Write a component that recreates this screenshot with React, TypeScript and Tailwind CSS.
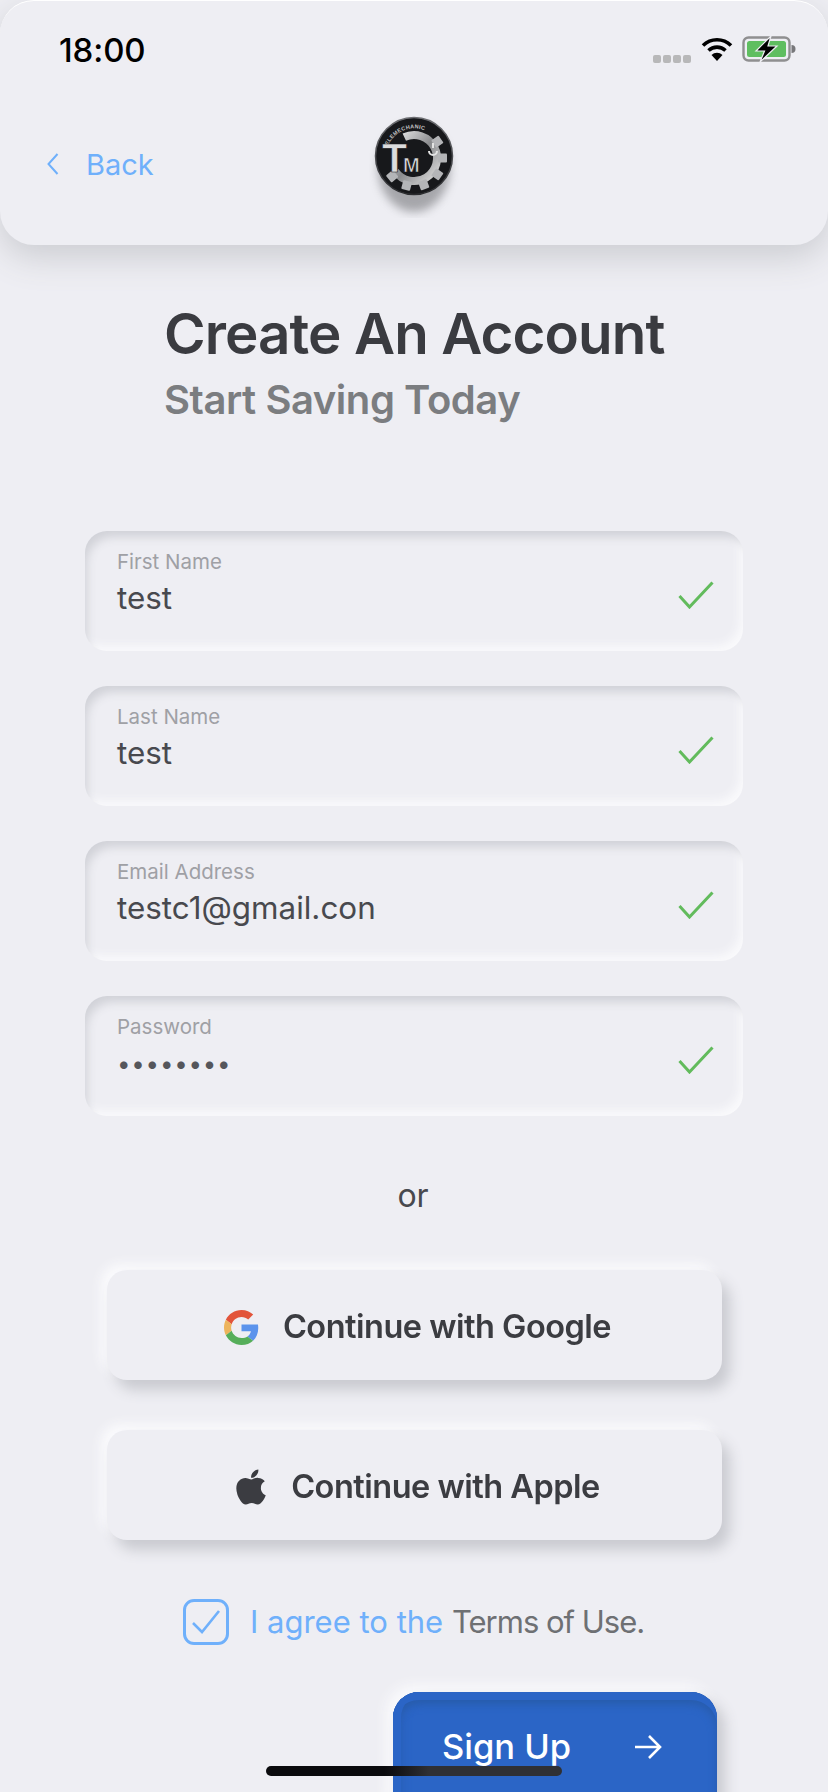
import React from 'react';
import { FaApple } from 'react-icons/fa';

const fields = [
  { label: 'First Name', value: 'test' },
  { label: 'Last Name', value: 'test' },
  { label: 'Email Address', value: 'testc1@gmail.con' },
  { label: 'Password', value: '••••••••', secret: true },
];

const gearTeeth = [55, 90, 125, 160, 195, 230];

const GoogleIcon = () => (
  <svg viewBox="0 0 48 48" className="w-[35px] h-[35px]">
    <path fill="#E2543A" d="M24 9.5c3.54 0 6.71 1.22 9.21 3.6l6.85-6.85C35.9 2.38 30.47 0 24 0 14.62 0 6.51 5.38 2.56 13.22l7.98 6.19C12.43 13.72 17.74 9.5 24 9.5z" />
    <path fill="#5B93EC" d="M46.98 24.55c0-1.57-.15-3.09-.38-4.55H24v9.02h12.94c-.58 2.96-2.26 5.48-4.78 7.18l7.73 6c4.51-4.18 7.09-10.36 7.09-17.65z" />
    <path fill="#EDB45C" d="M10.53 28.59c-.48-1.45-.76-2.99-.76-4.59s.27-3.14.76-4.59l-7.98-6.19C.92 16.46 0 20.12 0 24c0 3.88.92 7.54 2.56 10.78l7.97-6.19z" />
    <path fill="#56AE5A" d="M24 48c6.48 0 11.93-2.13 15.89-5.81l-7.73-6c-2.15 1.45-4.92 2.3-8.16 2.3-6.26 0-11.57-4.22-13.47-9.91l-7.98 6.19C6.51 42.62 14.62 48 24 48z" />
  </svg>
);

const Logo = () => (
  <svg viewBox="0 0 90 102" className="w-[90px] h-[102px]">
    <defs>
      <linearGradient id="metal" x1="0" y1="0" x2="1" y2="1">
        <stop offset="0" stopColor="#e8e8e8" />
        <stop offset="0.5" stopColor="#8a8b8e" />
        <stop offset="1" stopColor="#dedede" />
      </linearGradient>
      <linearGradient id="rimLine" x1="0" y1="0" x2="0" y2="1">
        <stop offset="0" stopColor="#6d6e72" />
        <stop offset="1" stopColor="#2a2b2e" />
      </linearGradient>
      <filter id="soft" x="-30%" y="-30%" width="160%" height="160%"><feGaussianBlur stdDeviation="5" /></filter>
      <path id="rim" d="M17 36 A29 29 0 0 1 74 36" />
    </defs>
    <ellipse cx="45" cy="52" rx="36" ry="44" fill="#6b6c70" filter="url(#soft)" opacity="0.55" />
    <circle cx="45" cy="40" r="38.5" fill="#17181b" stroke="url(#rimLine)" strokeWidth="1.5" />
    <path d="M35.3 21.2 A23 23 0 1 1 26.2 55.2" fill="none" stroke="url(#metal)" strokeWidth="8" />
    <g fill="#b4b5b8">
      {gearTeeth.map(a => (
        <rect key={a} x="40.5" y="9" width="9" height="9" rx="1" transform={`rotate(${a} 45 42)`} />
      ))}
    </g>
    <text fontFamily="Liberation Sans, sans-serif" fontSize="5.5" fontWeight="700" fill="#c4c4c4" letterSpacing="0.3">
      <textPath href="#rim" startOffset="3">TELEMECHANIC</textPath>
    </text>
    <text x="13" y="56" fontFamily="Liberation Sans, sans-serif" fontWeight="700" fill="#dcdcdd" stroke="#1b1b1d" strokeWidth="0.7">
      <tspan fontSize="41">T</tspan>
      <tspan fontSize="20" dx="-4">M</tspan>
    </text>
    <path d="M64 32 V27 M60 35 A4 4 0 0 0 68 35" fill="none" stroke="#e4e4e4" strokeWidth="2" />
  </svg>
);

const StatusBar = () => (
  <div className="flex items-center justify-between h-[100px] pl-[59px] pr-[32px]">
    <span className="mb-[2px] text-[33px] font-medium text-black leading-none -tracking-[0.1px]">18:00</span>
    <div className="flex items-center mb-[4px]">
      <div className="flex gap-[2px] mr-[10px] mt-[19px]">
        <span className="w-[8px] h-[8px] rounded-[2px] bg-[#b8b8b9]" />
        <span className="w-[8px] h-[8px] rounded-[2px] bg-[#b8b8b9]" />
        <span className="w-[8px] h-[8px] rounded-[2px] bg-[#b8b8b9]" />
        <span className="w-[8px] h-[8px] rounded-[2px] bg-[#b8b8b9]" />
      </div>
      <svg viewBox="0 0 32 24" className="w-[32px] h-[24px] mr-[9px]">
        <path d="M2 8.5 A20 20 0 0 1 30 8.5" fill="none" stroke="#000" strokeWidth="3.6" />
        <path d="M7.5 13.5 A12.5 12.5 0 0 1 24.5 13.5" fill="none" stroke="#000" strokeWidth="3.6" />
        <path d="M16 24 L10.5 18 A8 8 0 0 1 21.5 18 Z" fill="#000" />
      </svg>
      <svg viewBox="0 0 54 26" className="w-[54px] h-[26px]">
        <rect x="1.5" y="1.5" width="46" height="23" rx="5" fill="none" stroke="#8f8f90" strokeWidth="2.4" />
        <rect x="5" y="5" width="39" height="16" rx="2.5" fill="#5fbe60" />
        <path d="M49.5 9 A4 4 0 0 1 49.5 17 Z" fill="#77777a" />
        <path d="M29 0 L14 15 H22.5 L18 26 L35 10 H26 Z" fill="#000" stroke="#eeeef3" strokeWidth="1.2" />
      </svg>
    </div>
  </div>
);

const App: React.FC = () => {
  return (
    <div className="relative w-[828px] h-[1792px] overflow-hidden bg-[#eeeef3] font-['Inter','Liberation_Sans',sans-serif]">
      <header className="h-[245px] rounded-[34px] bg-[#eeeef3] border-t border-white shadow-[0_12px_34px_#cbccd1]">
        <StatusBar />
        <div className="relative flex items-center h-[120px] pl-[47px]">
          <svg viewBox="0 0 12 22" className="w-[12px] h-[22px] mt-[6px]">
            <path d="M10.5 1 L1.5 11 L10.5 21" fill="none" stroke="#6fb0fb" strokeWidth="2" />
          </svg>
          <span className="ml-[27px] mt-[6px] text-[29px] text-[#6fb0fb] leading-none">Back</span>
          <div className="absolute left-[369px] top-[15px]">
            <Logo />
          </div>
        </div>
      </header>

      <div className="ml-[164px] mt-[55px]">
        <h1 className="text-[56.5px] leading-[68px] font-semibold text-[#3a3b40] -tracking-[0.9px]">Create An Account</h1>
        <p className="text-[40px] leading-[48px] font-semibold text-[#7b7d80] mt-[8px] -tracking-[0.45px]">Start Saving Today</p>
      </div>

      <div className="mx-[85px] mt-[107px] flex flex-col gap-[35px]">
        {fields.map(f => (
          <div key={f.label} className="flex justify-between h-[120px] rounded-[22px] bg-[#eeeef3] pl-[32px] pr-[29px] shadow-[inset_6px_10px_10px_-4px_#d1d2d8,inset_-6px_-8px_10px_-3px_#fafafc]">
            <div>
              <div className="mt-[19px] text-[20.5px] leading-[24px] text-[#9fa0a5]">{f.label}</div>
              {f.secret ? (
                <div className="mt-[8px] text-[24px] leading-[34px] text-[#55565b] tracking-[0.8px]">{f.value}</div>
              ) : (
                <div className="mt-[5px] text-[31.4px] leading-[38px] text-[#48494e]">{f.value}</div>
              )}
            </div>
            <svg viewBox="0 0 36 28" className="w-[36px] h-[28px] mt-[50px]">
              <path d="M1.5 15 L11.5 26 L34.5 1.5" fill="none" stroke="#62bb5c" strokeWidth="3" />
            </svg>
          </div>
        ))}
      </div>

      <div className="mt-[60px] text-center text-[32px] leading-[40px] text-[#48494e] pr-[2px]">or</div>

      <div className="ml-[107px] mt-[54px] w-[615px] flex flex-col gap-[50px]">
        <button className="flex items-center justify-center h-[110px] rounded-[20px] bg-[#eeeef3] shadow-[8px_10px_14px_#c9cad0,-6px_-6px_12px_#fbfbfd]">
          <div className="flex items-center gap-[24px] blur-[0.7px] pl-[6px] mt-[4px]">
            <GoogleIcon />
            <span className="text-[32.5px] font-semibold text-[#3b3c41] -tracking-[0.5px]">Continue with Google</span>
          </div>
        </button>
        <button className="flex items-center justify-center h-[110px] rounded-[20px] bg-[#eeeef3] shadow-[8px_10px_14px_#c9cad0,-6px_-6px_12px_#fbfbfd]">
          <div className="flex items-center gap-[22px] blur-[0.7px] pl-[4px] mt-[4px]">
            <FaApple className="w-[36px] h-[40px] text-[#3b3c41]" />
            <span className="text-[32.5px] font-semibold text-[#3b3c41] -tracking-[0.5px]">Continue with Apple</span>
          </div>
        </button>
      </div>

      <div className="flex items-center ml-[183px] mt-[59px]">
        <div className="flex items-center justify-center w-[46px] h-[46px] rounded-[11px] border-[3px] border-[#6fb0fb]">
          <svg viewBox="0 0 30 26" className="w-[30px] h-[26px]">
            <path d="M2 14 L11 23 L28 2" fill="none" stroke="#6fb0fb" strokeWidth="2.6" />
          </svg>
        </div>
        <p className="ml-[21px] text-[31px] leading-[40px]">
          <span className="text-[#6fb0fb]">I agree to the</span> <span className="text-[#6e7073] -tracking-[1px]">Terms of Use.</span>
        </p>
      </div>

      <button className="flex items-center ml-[393px] mt-[47px] w-[324px] h-[130px] rounded-[26px] bg-[#2b65c6] pl-[49px] shadow-[inset_0_8px_0_#2b65c6,inset_8px_0_0_#2b65c6,inset_0_12px_8px_#285cab,inset_10px_0_8px_#2a60b8,8px_8px_14px_#c9cad0,-6px_-6px_14px_#fbfbfd]">
        <span className="text-[34.5px] font-medium text-white leading-none mt-[-20px]">Sign Up</span>
        <svg viewBox="0 0 28 26" className="w-[28px] h-[26px] ml-[63px] mt-[-20px]">
          <path d="M1 13 H26 M15 2 L26 13 L15 24" fill="none" stroke="#fff" strokeWidth="2.6" />
        </svg>
      </button>

      {/* home indicator sits over the button */}
      <div className="absolute left-[266px] top-[1766px] w-[296px] h-[10px] rounded-full bg-gradient-to-r from-[#0a0a0d] from-40% to-[#2f3034] to-55%" />
    </div>
  );
};

export default App;
